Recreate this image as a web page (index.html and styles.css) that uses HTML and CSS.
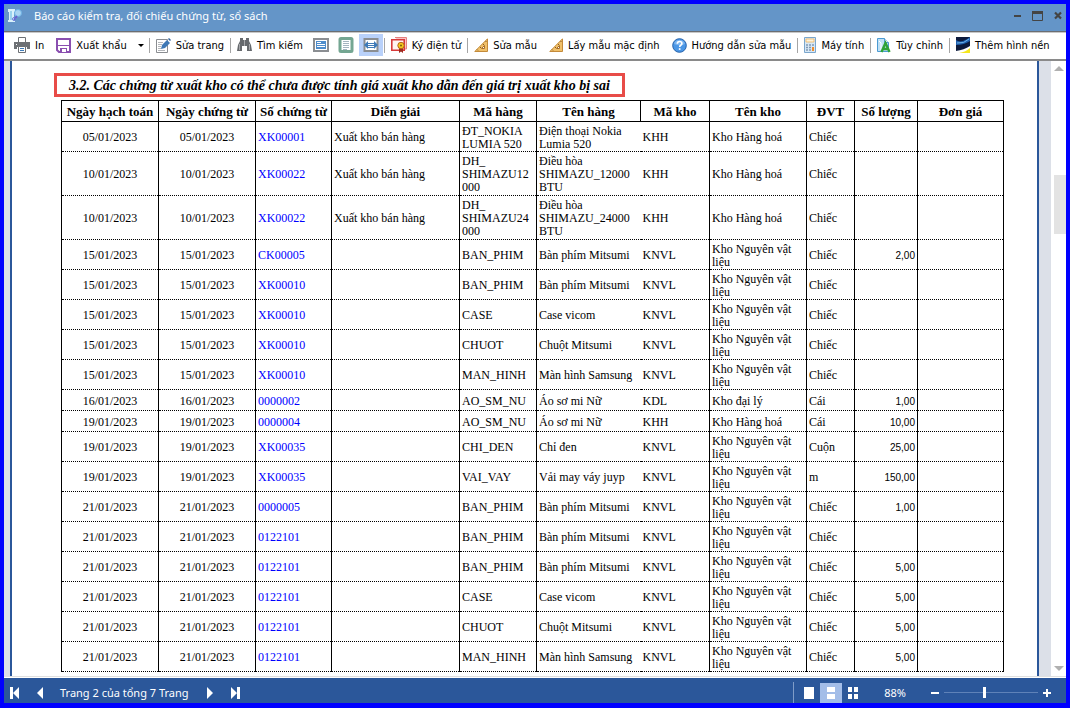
FILE: index.html
```html
<!DOCTYPE html>
<html lang="vi">

<head>
    <meta charset="UTF-8">
    <meta name="viewport" content="width=device-width, initial-scale=1.0">
    <title>Báo cáo kiểm tra, đối chiếu chứng từ, sổ sách</title>
    <link rel="stylesheet" href="styles.css">
</head>

<body>
    <div class="window">
        <!-- Title bar -->
        <header class="title-bar">
            <svg class="app-icon" width="14" height="15" viewBox="0 0 14 15">
                <path d="M0 1h7v3H6v8h1v2H0v-2h1V4H0z" fill="#d9f1fb" />
                <path d="M3 3v9" stroke="#5fb4e0" />
                <circle cx="10" cy="5" r="3.5" fill="#a9d4f2" stroke="#6fb2e4" />
                <path d="M9 8l-3 4" stroke="#6a5ad0" stroke-width="1.5" />
                <circle cx="6" cy="11" r="1.5" fill="none" stroke="#6a7ad8" />
            </svg>
            <h1>Báo cáo kiểm tra, đối chiếu chứng từ, sổ sách</h1>
            <div class="window-buttons">
                <button aria-label="Thu nhỏ"><svg width="12" height="12" viewBox="0 0 12 12"><path d="M2 5h7v2H2z" fill="#444" /></svg></button>
                <button aria-label="Phóng to"><svg width="12" height="12" viewBox="0 0 12 12"><path d="M.5 1.5h10v9H.5z" fill="none" stroke="#444" /><path d="M0 1h11v3H0z" fill="#444" /></svg></button>
                <button aria-label="Đóng"><svg width="12" height="12" viewBox="0 0 12 12"><path d="M3 2.5l6 6M9 2.5l-6 6" stroke="#444" stroke-width="2.2" /></svg></button>
            </div>
        </header>

        <!-- Toolbar -->
        <nav class="toolbar">
            <button class="tool">
                <svg width="16" height="16" viewBox="0 0 16 16">
                    <path d="M4.5 5V.5h7V5" fill="#fff" stroke="#6d7074" />
                    <path d="M0 5h16v7h-3v-2H3v2H0z" fill="#6d7074" />
                    <path d="M2 7h1v1H2z" fill="#fff" />
                    <path d="M4.5 9.5h7v6h-7z" fill="#fff" stroke="#6d7074" />
                    <path d="M6 11.5h4M6 13.5h4" stroke="#3d7ab8" />
                </svg>In</button>
            <button class="tool">
                <svg width="15" height="15" viewBox="0 0 15 15">
                    <path d="M1 1h13v13H3l-2-2z" fill="#fff" stroke="#8a4fb0" stroke-width="2" />
                    <path d="M2 7.5h11" stroke="#8a4fb0" />
                    <path d="M4 10h7v4H4z" fill="#8a4fb0" />
                    <path d="M6 11h4v3H6z" fill="#fff" />
                </svg>Xuất khẩu</button>
            <button class="drop" aria-label="Chọn định dạng"></button>
            <i class="sep"></i>
            <button class="tool">
                <svg width="15" height="15" viewBox="0 0 15 15">
                    <path d="M.5 1.5h11v13H.5z" fill="#fff" stroke="#8a8d91" />
                    <path d="M2 4.5h5M2 6.5h4M2 8.5h3M2 10.5h3M2 12.5h7" stroke="#b3b6ba" />
                    <path d="M5 11l1-4 5-5 3 3-5 5z" fill="#3f78b5" />
                    <path d="M12 1l1-1 2 2-1 1z" fill="#2d5f98" />
                </svg>Sửa trang</button>
            <i class="sep"></i>
            <button class="tool">
                <svg width="15" height="14" viewBox="0 0 15 14">
                    <path d="M3 0h3v2h3V0h3v3l2 4 1 6h-5V8H5v5H0l1-6 2-4z" fill="#66696d" />
                    <path d="M7.5 2v6M2.5 6v6M12.5 6v6" stroke="#a5a7aa" />
                </svg>Tìm kiếm</button>
            <button class="view" aria-label="Xem ngang">
                <svg width="16" height="14" viewBox="0 0 16 14">
                    <path d="M1 1h14v12H1z" fill="#fff" stroke="#8b8e92" stroke-width="2" />
                    <path d="M3 3h10v8H3z" fill="#4e8ccb" />
                    <path d="M4 4.5h4M4 6.5h8M4 8.5h8" stroke="#fff" />
                </svg></button>
            <button class="view" aria-label="Xem dọc">
                <svg width="16" height="16" viewBox="0 0 16 16">
                    <rect x="2" y="1.5" width="12" height="13" rx="1" fill="#fff" stroke="#74a692" stroke-width="3" />
                    <path d="M5 4.5h6M5 6.5h6M5 8.5h6M5 10.5h6M5 12.5h4" stroke="#a5b4c0" />
                </svg></button>
            <button class="view active" aria-label="Vừa chiều rộng">
                <svg width="16" height="14" viewBox="0 0 16 14">
                    <path d="M1.5 1h13v12h-13z" fill="#fff" stroke="#8b8e92" stroke-width="2" />
                    <path d="M1 7l4-4v8zM15 7l-4-4v8z" fill="#3f7ab8" />
                    <path d="M5 5.5h6M5 7.5h6M5 9.5h6" stroke="#3f7ab8" />
                </svg></button>
            <i class="sep"></i>
            <button class="tool">
                <svg width="16" height="17" viewBox="0 0 16 17">
                    <path d="M4 .5h11.500V12H14" fill="#f9c4c4" stroke="#e58080" />
                    <path d="M.8 2.800h12.400v10.400H.8z" fill="#fff4f2" stroke="#d8393a" stroke-width="1.600" />
                    <path d="M8 10h4v6l-2-1.500L8 16z" fill="#9b2a1f" />
                    <circle cx="10" cy="8.500" r="3.200" fill="#f4c81e" stroke="#b5641a" />
                    <circle cx="10" cy="8.500" r="1" fill="#7a5a10" />
                </svg>Ký điện tử</button>
            <i class="sep"></i>
            <button class="tool">
                <svg width="14" height="14" viewBox="0 0 14 14">
                    <path d="M13.500.8v12.700H.8z" fill="#f0c069" stroke="#c48a3a" />
                    <path d="M10.500 7.500v3h-3z" fill="#fff" stroke="#a86f2a" />
                    <path d="M11.500 3l1 1M9 6l1 1M6 9l1 1M3 11.500l1 1" stroke="#8a5a20" />
                </svg>Sửa mẫu</button>
            <button class="tool">
                <svg width="14" height="14" viewBox="0 0 14 14">
                    <path d="M13.500.8v12.700H.8z" fill="#f0c069" stroke="#c48a3a" />
                    <path d="M10.500 7.500v3h-3z" fill="#fff" stroke="#a86f2a" />
                    <path d="M11.500 3l1 1M9 6l1 1M6 9l1 1M3 11.500l1 1" stroke="#8a5a20" />
                </svg>Lấy mẫu mặc định</button>
            <button class="tool">
                <svg width="15" height="15" viewBox="0 0 15 15">
                    <circle cx="7.500" cy="7.500" r="6.800" fill="#4b97e6" stroke="#2462ac" />
                    <path d="M2 6a5.600 5 0 0 1 11 0q-5 2.500-11 0z" fill="#7ab4f0" />
                    <path d="M5.300 5.800q0-2.300 2.300-2.300t2.300 2q0 1.200-1.200 1.800-1 .6-1 1.700" fill="none" stroke="#fff" stroke-width="1.600" />
                    <path d="M6.800 10.200h1.700v1.700H6.800z" fill="#fff" />
                </svg>Hướng dẫn sửa mẫu</button>
            <i class="sep"></i>
            <button class="tool">
                <svg width="12" height="16" viewBox="0 0 12 16">
                    <path d="M.5.5h11v15H.5z" fill="#d7e8f6" stroke="#7ba6cc" />
                    <path d="M2 2h8v3H2z" fill="#fdf3dd" stroke="#f0b660" stroke-width=".8" />
                    <path d="M2 8h2M5 8h2M8 8h2M2 10.500h2M5 10.500h2M2 13h2M5 13h2" stroke="#8199b5" stroke-width="1.500" />
                    <path d="M8 10h2v4H8z" fill="#f08c2c" />
                </svg>Máy tính</button>
            <i class="sep"></i>
            <button class="tool">
                <svg width="14" height="15" viewBox="0 0 14 15">
                    <path d="M.5.5h7l4 4v9H.5z" fill="#bfe0f5" stroke="#4c9bd3" />
                    <path d="M7.500.5v4h4" fill="#fff" stroke="#4c9bd3" />
                    <path d="M2 3l2 2v7" fill="none" stroke="#fff" />
                    <path d="M4.500 14l4-9 4 9M6 11h5" fill="none" stroke="#2fa336" stroke-width="2.400" />
                </svg>Tùy chỉnh</button>
            <i class="sep"></i>
            <button class="tool">
                <svg width="14" height="16" viewBox="0 0 14 16">
                    <path d="M0 0h14v16H0z" fill="#0d1b3d" />
                    <path d="M0 8V3q5 4 14-3v4Q8 8 0 8z" fill="#1f5fae" />
                    <path d="M1 6q7 1 12-4" fill="none" stroke="#6fb6ea" />
                    <path d="M0 16v-2q8-1 14-5v7z" fill="#fff" />
                    <path d="M3 16q7-1 11-5v5z" fill="#f5e61c" />
                </svg>Thêm hình nền</button>
        </nav>

        <!-- Report page -->
        <main class="viewer">
            <section class="page">
                <h2>3.2. Các chứng từ xuất kho có thể chưa được tính giá xuất kho dẫn đến giá trị xuất kho bị sai</h2>
                <table class="report">
                    <colgroup>
                        <col class="c-date"><col class="c-date"><col class="c-no"><col class="c-desc"><col class="c-code"><col class="c-name"><col class="c-store"><col class="c-date"><col class="c-unit"><col class="c-qty"><col>
                    </colgroup>
                    <thead>
                        <tr>
                            <th>Ngày hạch toán</th><th>Ngày chứng từ</th><th>Số chứng từ</th><th>Diễn giải</th><th>Mã hàng</th><th>Tên hàng</th><th>Mã kho</th><th>Tên kho</th><th>ĐVT</th><th>Số lượng</th><th>Đơn giá</th>
                        </tr>
                    </thead>
                    <tbody>
                        <tr><td>05/01/2023</td><td>05/01/2023</td><td><a href="#">XK00001</a></td><td>Xuất kho bán hàng</td><td>ĐT_NOKIA<br>LUMIA 520</td><td>Điện thoại Nokia<br>Lumia 520</td><td>KHH</td><td>Kho Hàng hoá</td><td>Chiếc</td><td></td><td></td></tr>
                        <tr class="tall"><td>10/01/2023</td><td>10/01/2023</td><td><a href="#">XK00022</a></td><td>Xuất kho bán hàng</td><td>DH_<br>SHIMAZU12<br>000</td><td>Điều hòa<br>SHIMAZU_12000<br>BTU</td><td>KHH</td><td>Kho Hàng hoá</td><td>Chiếc</td><td></td><td></td></tr>
                        <tr class="tall"><td>10/01/2023</td><td>10/01/2023</td><td><a href="#">XK00022</a></td><td>Xuất kho bán hàng</td><td>DH_<br>SHIMAZU24<br>000</td><td>Điều hòa<br>SHIMAZU_24000<br>BTU</td><td>KHH</td><td>Kho Hàng hoá</td><td>Chiếc</td><td></td><td></td></tr>
                        <tr><td>15/01/2023</td><td>15/01/2023</td><td><a href="#">CK00005</a></td><td></td><td>BAN_PHIM</td><td>Bàn phím Mitsumi</td><td>KNVL</td><td>Kho Nguyên vật<br>liệu</td><td>Chiếc</td><td>2,00</td><td></td></tr>
                        <tr><td>15/01/2023</td><td>15/01/2023</td><td><a href="#">XK00010</a></td><td></td><td>BAN_PHIM</td><td>Bàn phím Mitsumi</td><td>KNVL</td><td>Kho Nguyên vật<br>liệu</td><td>Chiếc</td><td></td><td></td></tr>
                        <tr><td>15/01/2023</td><td>15/01/2023</td><td><a href="#">XK00010</a></td><td></td><td>CASE</td><td>Case vicom</td><td>KNVL</td><td>Kho Nguyên vật<br>liệu</td><td>Chiếc</td><td></td><td></td></tr>
                        <tr><td>15/01/2023</td><td>15/01/2023</td><td><a href="#">XK00010</a></td><td></td><td>CHUOT</td><td>Chuột Mitsumi</td><td>KNVL</td><td>Kho Nguyên vật<br>liệu</td><td>Chiếc</td><td></td><td></td></tr>
                        <tr><td>15/01/2023</td><td>15/01/2023</td><td><a href="#">XK00010</a></td><td></td><td>MAN_HINH</td><td>Màn hình Samsung</td><td>KNVL</td><td>Kho Nguyên vật<br>liệu</td><td>Chiếc</td><td></td><td></td></tr>
                        <tr class="short"><td>16/01/2023</td><td>16/01/2023</td><td><a href="#">0000002</a></td><td></td><td>AO_SM_NU</td><td>Áo sơ mi Nữ</td><td>KDL</td><td>Kho đại lý</td><td>Cái</td><td>1,00</td><td></td></tr>
                        <tr class="short"><td>19/01/2023</td><td>19/01/2023</td><td><a href="#">0000004</a></td><td></td><td>AO_SM_NU</td><td>Áo sơ mi Nữ</td><td>KHH</td><td>Kho Hàng hoá</td><td>Cái</td><td>10,00</td><td></td></tr>
                        <tr><td>19/01/2023</td><td>19/01/2023</td><td><a href="#">XK00035</a></td><td></td><td>CHI_DEN</td><td>Chỉ đen</td><td>KNVL</td><td>Kho Nguyên vật<br>liệu</td><td>Cuộn</td><td>25,00</td><td></td></tr>
                        <tr><td>19/01/2023</td><td>19/01/2023</td><td><a href="#">XK00035</a></td><td></td><td>VAI_VAY</td><td>Vải may váy juyp</td><td>KNVL</td><td>Kho Nguyên vật<br>liệu</td><td>m</td><td>150,00</td><td></td></tr>
                        <tr><td>21/01/2023</td><td>21/01/2023</td><td><a href="#">0000005</a></td><td></td><td>BAN_PHIM</td><td>Bàn phím Mitsumi</td><td>KNVL</td><td>Kho Nguyên vật<br>liệu</td><td>Chiếc</td><td>1,00</td><td></td></tr>
                        <tr><td>21/01/2023</td><td>21/01/2023</td><td><a href="#">0122101</a></td><td></td><td>BAN_PHIM</td><td>Bàn phím Mitsumi</td><td>KNVL</td><td>Kho Nguyên vật<br>liệu</td><td>Chiếc</td><td></td><td></td></tr>
                        <tr><td>21/01/2023</td><td>21/01/2023</td><td><a href="#">0122101</a></td><td></td><td>BAN_PHIM</td><td>Bàn phím Mitsumi</td><td>KNVL</td><td>Kho Nguyên vật<br>liệu</td><td>Chiếc</td><td>5,00</td><td></td></tr>
                        <tr><td>21/01/2023</td><td>21/01/2023</td><td><a href="#">0122101</a></td><td></td><td>CASE</td><td>Case vicom</td><td>KNVL</td><td>Kho Nguyên vật<br>liệu</td><td>Chiếc</td><td>5,00</td><td></td></tr>
                        <tr><td>21/01/2023</td><td>21/01/2023</td><td><a href="#">0122101</a></td><td></td><td>CHUOT</td><td>Chuột Mitsumi</td><td>KNVL</td><td>Kho Nguyên vật<br>liệu</td><td>Chiếc</td><td>5,00</td><td></td></tr>
                        <tr><td>21/01/2023</td><td>21/01/2023</td><td><a href="#">0122101</a></td><td></td><td>MAN_HINH</td><td>Màn hình Samsung</td><td>KNVL</td><td>Kho Nguyên vật<br>liệu</td><td>Chiếc</td><td>5,00</td><td></td></tr>
                    </tbody>
                </table>
            </section>
            <div class="scrollbar">
                <span class="arrow up"></span>
                <div class="track"><div class="thumb"></div></div>
                <span class="arrow down"></span>
            </div>
        </main>

        <!-- Status bar -->
        <footer class="status-bar">
            <button aria-label="Trang đầu"><svg width="10" height="12" viewBox="0 0 10 12"><path d="M0 0h3v12H0zM9 0v12L3 6z" fill="#fff" /></svg></button>
            <button aria-label="Trang trước"><svg width="10" height="12" viewBox="0 0 10 12"><path d="M8 0v12L2 6z" fill="#fff" /></svg></button>
            <span class="page-label">Trang 2 của tổng 7 Trang</span>
            <button aria-label="Trang sau"><svg width="10" height="12" viewBox="0 0 10 12"><path d="M2 0v12l6-6z" fill="#fff" /></svg></button>
            <button aria-label="Trang cuối"><svg width="10" height="12" viewBox="0 0 10 12"><path d="M7 0h3v12H7zM1 0v12l6-6z" fill="#fff" /></svg></button>
            <div class="zoom-tools">
                <button class="mode" aria-label="Một trang"><svg width="12" height="12" viewBox="0 0 12 12"><path d="M1 0h10v12H1z" fill="#fff" /></svg></button>
                <button class="mode active" aria-label="Cuộn liên tục"><svg width="12" height="12" viewBox="0 0 12 12"><path d="M2 0h8v5H2zM2 7h8v5H2z" fill="#fff" /></svg></button>
                <button class="mode" aria-label="Nhiều trang"><svg width="12" height="12" viewBox="0 0 12 12"><path d="M1 0h4v5H1zM7 0h4v5H7zM1 7h4v5H1zM7 7h4v5H7z" fill="#fff" /></svg></button>
                <label for="zoom">88%</label>
                <button aria-label="Thu nhỏ trang"><svg width="10" height="10" viewBox="0 0 10 10"><path d="M1 4h8v2H1z" fill="#fff" /></svg></button>
                <input type="range" id="zoom" min="0" max="100" value="43">
                <button aria-label="Phóng to trang"><svg width="10" height="10" viewBox="0 0 10 10"><path d="M1 4h8v2H1zM4 1h2v8H4z" fill="#fff" /></svg></button>
            </div>
        </footer>
    </div>
</body>

</html>
```
FILE: styles.css
```css
* {
    box-sizing: border-box;
}

body {
    margin: 0;
    font-family: "Noto Sans", "Open Sans", sans-serif;
    font-size: 11px;
}

button {
    display: flex;
    align-items: center;
    justify-content: center;
    padding: 0;
    border: none;
    background: none;
    font: inherit;
    color: inherit;
    cursor: pointer;
}

svg {
    display: block;
    flex: none;
}

.window {
    display: flex;
    flex-direction: column;
    height: 100vh;
    border: 4px solid #0000ff;
    border-bottom-width: 5px;
    background-color: #fff;
}

/* Title bar */
.title-bar {
    display: flex;
    align-items: center;
    flex: none;
    height: 28px;
    padding: 0 2px 4px 4px;
    background-color: #6495c8;
    border-bottom: 1px solid #6b6e72;
    color: #fff;
}

.title-bar h1 {
    flex: 1;
    margin: 0 0 0 12px;
    font-size: 11px;
    font-weight: normal;
}

.window-buttons {
    display: flex;
    gap: 8px;
}

/* Toolbar */
.toolbar {
    display: flex;
    align-items: center;
    flex: none;
    height: 29px;
    padding: 0 0 2px 4px;
    border-top: 1px solid #c8c8c8;
    border-bottom: 2px solid #8a8a8a;
    font-family: "DejaVu Sans Condensed", "DejaVu Sans", sans-serif;
    color: #000;
    white-space: nowrap;
}

.tool {
    gap: 5px;
    height: 22px;
    padding: 0 6px;
}

.drop {
    width: 16px;
    height: 22px;
}

.drop::after {
    content: "";
    border: 3px solid transparent;
    border-top-color: #000;
    border-bottom: none;
}

.sep {
    width: 1px;
    height: 15px;
    background-color: #a5a5a5;
}

.view {
    width: 24px;
    height: 22px;
    margin-right: 1px;
}

.view.active {
    background-color: #b9d1fa;
}

/* Report page */
.viewer {
    display: flex;
    flex: 1;
    min-height: 0;
    overflow: hidden;
    border-bottom: 1px solid #e0e0e0;
    background-color: #dce0e8;
}

.page {
    flex: 1;
    margin: 0 12px 0 6px;
    padding: 12px 33px 0 42px;
    border: solid #2b579a;
    border-width: 0 2px;
    background-color: #fff;
    font-family: "Liberation Serif", serif;
}

.page h2 {
    width: fit-content;
    height: 24px;
    margin: 0 0 3px;
    padding: 0 12px;
    border: 3px solid #e84c48;
    font-size: 14px;
    font-style: italic;
    line-height: 20px;
    white-space: nowrap;
}

.report {
    width: calc(100% - 7px);
    margin-left: 7px;
    border-collapse: collapse;
    table-layout: fixed;
    border: 1px solid #000;
    border-bottom-style: dotted;
    font-size: 12px;
    line-height: 13px;
}

.c-date {
    width: 97px;
}

.c-no {
    width: 76px;
}

.c-desc {
    width: 128px;
}

.c-code {
    width: 77px;
}

.c-name {
    width: 104px;
}

.c-store {
    width: 69px;
}

.c-unit {
    width: 48px;
}

.c-qty {
    width: 63px;
}

.report th {
    height: 21px;
    padding: 0;
    border: 1px solid #000;
    font-size: 13px;
    white-space: nowrap;
}

.report td {
    height: 30px;
    padding: 2px 2px 0;
    border: 1px solid #000;
    border-top-style: dotted;
    border-bottom-style: dotted;
    white-space: nowrap;
}

.report thead th {
    border-bottom: 1px solid #000;
}

.report .tall td {
    height: 44px;
}

.report .short td {
    height: 21px;
}

.report td:nth-child(-n+2) {
    text-align: center;
}

.report td:nth-child(6) {
    border-right: none;
}

.report td:nth-child(7) {
    border-left: none;
}

.report td:nth-child(10) {
    font-family: "Liberation Sans", sans-serif;
    font-size: 10px;
    text-align: right;
}

.report a {
    color: #0000ff;
    text-decoration: none;
}

.scrollbar {
    display: flex;
    flex-direction: column;
    align-items: center;
    width: 15px;
    padding: 5px 0;
    background-color: #fff;
}

.arrow {
    border: 5px solid transparent;
}

.arrow.up {
    border-top: none;
    border-bottom-color: #b0b0b0;
}

.arrow.down {
    border-bottom: none;
    border-top-color: #b0b0b0;
}

.track {
    flex: 1;
    width: 12px;
    margin-left: 3px;
    padding-top: 104px;
}

.thumb {
    height: 59px;
    background-color: #e3e3e3;
}

/* Status bar */
.status-bar {
    display: flex;
    align-items: center;
    flex: none;
    height: 26px;
    padding: 4px 14px 0 6px;
    border-top: 1px solid #fff;
    background-color: #2b579a;
    color: #fff;
}

.status-bar > button {
    margin-right: 15px;
}

.page-label {
    margin-right: 16px;
}

.zoom-tools {
    display: flex;
    align-items: center;
    height: 21px;
    margin-left: auto;
    padding-left: 4px;
    border-left: 1px solid #7f9cc8;
}

.mode {
    width: 22px;
    height: 20px;
}

.mode.active {
    background-color: #a3bde8;
}

.zoom-tools label {
    margin: 0 24px 0 20px;
}

.zoom-tools input {
    appearance: none;
    width: 94px;
    height: 12px;
    margin: 0 4px;
    background: linear-gradient(#5f82b8, #5f82b8) center / 100% 1px no-repeat;
}

.zoom-tools input::-webkit-slider-thumb {
    appearance: none;
    width: 3px;
    height: 11px;
    background-color: #fff;
}
```
